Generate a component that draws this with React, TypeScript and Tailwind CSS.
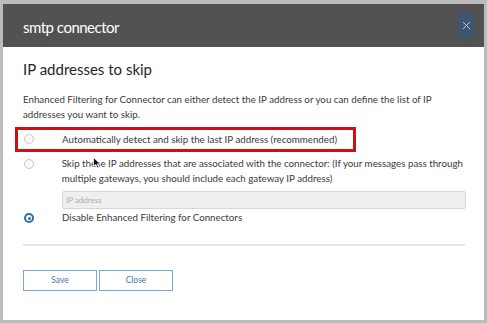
import { X } from 'lucide-react';

const font = { fontFamily: 'Lato, "Noto Sans", sans-serif' };

function Radio({ checked }: { checked?: boolean }) {
  if (checked) {
    return (
      <span className="w-[10px] h-[10px] rounded-full bg-[#2d6db5] flex items-center justify-center">
        <span className="w-[6px] h-[6px] rounded-full bg-white flex items-center justify-center">
          <span className="w-[3px] h-[3px] rounded-full bg-[#2d6db5]" />
        </span>
      </span>
    );
  }
  return <span className="w-[10px] h-[10px] rounded-full border border-[#c8c8c8] bg-[#fafafa]" />;
}

export default function App() {
  return (
    <div
      className="w-[487px] h-[323px] bg-[#bcbcbc] pt-[4px] px-[3px] pb-[3px] flex flex-col overflow-hidden"
      style={font}
    >
      {/* Header */}
      <div className="h-[43px] shrink-0 bg-[#525252] flex items-center justify-between pl-[20px] pr-[10px]">
        <span className="text-white text-[15px] tracking-[-0.5px] leading-none pt-[3px]">smtp connector</span>
        <span className="w-[16px] h-[25px] bg-[#3e5670] flex items-center justify-center">
          <X size={13} strokeWidth={1.4} className="text-[#e6e6e6]" />
        </span>
      </div>

      {/* Body */}
      <div className="flex-1 bg-white pl-[20px] pr-[18px] relative text-[#3a3a3a]">
        <div className="mt-[12px] text-[15px] leading-[20px] text-[#262626]">IP addresses to skip</div>

        <p className="mt-[12.5px] text-[9.75px] leading-[15px] w-[428px]">
          Enhanced Filtering for Connector can either detect the IP address or you can define the list of IP
          addresses you want to skip.
        </p>

        <div className="mt-[10px] flex items-center text-[9.75px] leading-[15px]">
          <span className="w-[39px] pl-[1px] flex items-center"><Radio /></span>
          <span>Automatically detect and skip the last IP address (recommended)</span>
        </div>

        <div className="mt-[9px] flex text-[9.75px] leading-[15px]">
          <span className="w-[39px] pl-[1px] pt-[3px] flex items-start"><Radio /></span>
          <span className="w-[408px]">
            Skip these IP addresses that are associated with the connector: (If your messages pass through
            multiple gateways, you should include each gateway IP address)
          </span>
        </div>

        <div className="mt-[5.5px] ml-[39px] h-[18px] w-[404px] bg-[#efefef] border border-[#d6d6d6] rounded-[2px] flex items-center px-[3px] text-[8px] text-[#adadad]">
          IP address
        </div>

        <div className="mt-[0.5px] flex items-center text-[9.75px] leading-[15px]">
          <span className="w-[39px] pl-[1px] pt-[2px] flex items-center"><Radio checked /></span>
          <span>Disable Enhanced Filtering for Connectors</span>
        </div>

        <div className="mt-[19.5px] h-[2px] w-[442px] bg-[#e6e6e6]" />

        <div className="mt-[24px] flex gap-[2px]">
          <button className="w-[74px] h-[21px] border border-[#7ba7cf] bg-white text-[8.5px] text-[#3f74b3]">
            Save
          </button>
          <button className="w-[74px] h-[21px] border border-[#7ba7cf] bg-white text-[8.5px] text-[#3f74b3]">
            Close
          </button>
        </div>

        {/* Annotation highlight */}
        <div className="absolute left-[12px] top-[80px] w-[341px] h-[25px] border-[3px] border-[#cc1016]" />

        {/* Mouse cursor */}
        <svg className="absolute left-[90px] top-[110px]" width="8" height="12" viewBox="0 0 8 12">
          <path d="M0.5 0.5 L0.5 9.5 L2.8 7.4 L4.4 11 L5.8 10.4 L4.3 6.9 L7.3 6.9 Z" fill="#111" stroke="#fff" strokeWidth="0.8" />
        </svg>
      </div>
    </div>
  );
}
